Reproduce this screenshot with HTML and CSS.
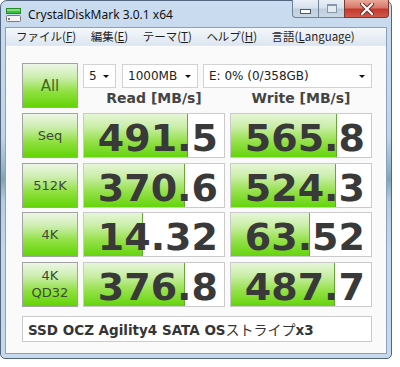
FILE: index.html
```html
<!DOCTYPE html>
<html lang="ja">
<head>
    <meta charset="UTF-8">
    <title>CrystalDiskMark 3.0.1 x64</title>
    <link rel="stylesheet" href="styles.css">
</head>
<body>

<div class="window">
    <!-- Title bar -->
    <div class="titlebar">
        <svg class="app-icon" width="15" height="14" viewBox="0 0 15 14">
            <rect x="0.5" y="0.5" width="14" height="5" fill="#39c03a" stroke="#2a8a2a"/>
            <rect x="1" y="1" width="13" height="2" fill="#7ee07a"/>
            <rect x="0.5" y="7.5" width="14" height="6" rx="1" fill="#f4f4f4" stroke="#7a7a7a"/>
            <rect x="2" y="10" width="2" height="2" fill="#7a7a7a"/>
        </svg>
        <span class="title">CrystalDiskMark 3.0.1 x64</span>
        <div class="caption-buttons">
            <div class="cap-btn min"><span class="min-icon"></span></div>
            <div class="cap-btn max"><span class="max-icon"></span></div>
            <div class="cap-btn close">
                <svg width="14" height="12" viewBox="0 0 14 12">
                    <path d="M2 1 L12 11 M12 1 L2 11" stroke="#6b2a24" stroke-width="4" stroke-linecap="round"/>
                    <path d="M2 1 L12 11 M12 1 L2 11" stroke="#fff" stroke-width="2.2" stroke-linecap="round"/>
                </svg>
            </div>
        </div>
    </div>

    <div class="client">
        <!-- Menu -->
        <div class="menubar">
            <span class="menu-item">ファイル(<u>F</u>)</span>
            <span class="menu-item">編集(<u>E</u>)</span>
            <span class="menu-item">テーマ(<u>T</u>)</span>
            <span class="menu-item">ヘルプ(<u>H</u>)</span>
            <span class="menu-item">言語(<u>L</u>anguage)</span>
        </div>

        <div class="content">
            <div class="top">
                <div class="test-btn all">All</div>
                <div class="top-right">
                    <div class="selects">
                        <div class="select sel-count">5<i class="arrow"></i></div>
                        <div class="select sel-size">1000MB<i class="arrow"></i></div>
                        <div class="select sel-drive">E: 0% (0/358GB)<i class="arrow"></i></div>
                    </div>
                    <div class="heads">
                        <div class="head">Read [MB/s]</div>
                        <div class="head">Write [MB/s]</div>
                    </div>
                </div>
            </div>

            <div class="rows">
                <div class="test-btn">Seq</div>
                <div class="cell"><div class="bar" style="width:104px"></div><span class="num">491.5</span></div>
                <div class="cell"><div class="bar" style="width:106px"></div><span class="num">565.8</span></div>

                <div class="test-btn">512K</div>
                <div class="cell"><div class="bar" style="width:101px"></div><span class="num">370.6</span></div>
                <div class="cell"><div class="bar" style="width:105px"></div><span class="num">524.3</span></div>

                <div class="test-btn">4K</div>
                <div class="cell"><div class="bar" style="width:59px"></div><span class="num">14.32</span></div>
                <div class="cell"><div class="bar" style="width:79px"></div><span class="num">63.52</span></div>

                <div class="test-btn two-line">4K<br>QD32</div>
                <div class="cell"><div class="bar" style="width:101px"></div><span class="num">376.8</span></div>
                <div class="cell"><div class="bar" style="width:104px"></div><span class="num">487.7</span></div>
            </div>

            <div class="comment">SSD OCZ Agility4 SATA OS<span class="jp">ストライプ</span>x3</div>
        </div>
    </div>
</div>

</body>
</html>
```

FILE: styles.css
```css
body {
    margin: 0;
    background-color: #fff;
    font-family: "DejaVu Sans", "Noto Sans CJK JP", sans-serif;
}
.window {
    width: 392px;
    height: 359px;
    box-sizing: border-box;
    display: flex;
    flex-direction: column;
    border: 1px solid #52677e;
    border-radius: 7px 7px 5px 5px;
    background: linear-gradient(to bottom, #cadcef 0%, #c0d4e9 38%, #93b4c4 47%, #7fa6b3 50%, #b5cde0 56%, #c4d7eb 70%, #c7d9ec 100%);
}

/* title bar */
.titlebar {
    height: 26px;
    display: flex;
    align-items: center;
}
.app-icon {
    margin-left: 5px;
    margin-top: 2px;
}
.title {
    margin-left: 7px;
    margin-top: 1px;
    font-family: "Noto Sans", sans-serif;
    font-size: 12px;
    color: #111;
}
.caption-buttons {
    margin-left: auto;
    margin-right: 2px;
    align-self: flex-start;
    margin-top: -1px;
    display: flex;
}
.cap-btn {
    height: 18px;
    display: flex;
    align-items: center;
    justify-content: center;
    box-sizing: border-box;
    border: 1px solid #6f8399;
    border-top: none;
}
.cap-btn.min,
.cap-btn.max {
    width: 26px;
    background: linear-gradient(to bottom, #e9eff6 0%, #d8e2ed 45%, #bfcedd 55%, #cbd8e6 100%);
}
.cap-btn.min {
    border-radius: 0 0 0 4px;
    border-right: none;
}
.cap-btn.max {
    border-right: none;
}
.cap-btn.close {
    width: 45px;
    border-radius: 0 0 4px 0;
    border-color: #7a3b35;
    background: linear-gradient(to bottom, #e8a898 0%, #d9786a 45%, #c23a2e 55%, #d2584a 100%);
}
.min-icon {
    width: 9px;
    height: 3px;
    margin-top: 5px;
    border: 1px solid #4c5c6e;
    background: #fff;
}
.max-icon {
    width: 8px;
    height: 6px;
    border: 1px solid #8697aa;
    border-top-width: 2px;
    background: #e4ebf3;
}

/* client area */
.client {
    flex: 1;
    margin: 0 4px 4px;
    border: 1px solid #8aa1ba;
    display: flex;
    flex-direction: column;
    background-color: #fafafa;
}
.menubar {
    height: 17px;
    display: flex;
    align-items: center;
    padding-left: 10px;
    background: linear-gradient(to bottom, #f5f8fb, #dde6f0);
    border-bottom: 1px solid #e3e9f0;
    font-family: "Noto Sans CJK JP", sans-serif;
    font-size: 11.5px;
    color: #1e1e1e;
}
.menu-item {
    margin-right: 14.5px;
    line-height: 17px;
}
.menu-item u {
    text-decoration-thickness: 1px;
    text-underline-offset: 1px;
}
.content {
    flex: 1;
    padding: 17px 0 0 16px;
}

/* buttons */
.test-btn {
    box-sizing: border-box;
    width: 56px;
    display: flex;
    align-items: center;
    justify-content: center;
    text-align: center;
    border: 1px solid #a3a3a3;
    background: linear-gradient(to bottom, #edf6e6 0%, #cdeeb0 30%, #8fe040 65%, #62d404 100%);
    font-size: 13px;
    color: #3d4a34;
}
.test-btn.all {
    height: 45px;
    font-size: 15px;
    color: #3f6a24;
}
.test-btn.two-line {
    line-height: 17px;
}

/* top area */
.top {
    display: flex;
    gap: 5px;
}
.top-right {
    width: 289px;
    display: flex;
    flex-direction: column;
}
.selects {
    margin-top: 1px;
    display: flex;
    gap: 5px;
}
.select {
    box-sizing: border-box;
    height: 24px;
    display: flex;
    align-items: center;
    padding: 0 6px 0 5px;
    background: #fff;
    border: 1px solid #d2d2d2;
    font-size: 12px;
    color: #222;
}
.sel-count { width: 33px; }
.sel-size { width: 76px; margin-left: 1px; }
.sel-drive { flex: 1; }
.arrow {
    margin-left: auto;
    width: 0;
    height: 0;
    border-left: 3px solid transparent;
    border-right: 3px solid transparent;
    border-top: 3px solid #111;
}
.heads {
    display: grid;
    grid-template-columns: 142px 142px;
    column-gap: 5px;
}
.head {
    text-align: center;
    font-weight: bold;
    font-size: 14px;
    line-height: 20px;
    color: #444;
}

/* result rows */
.rows {
    margin-top: 5px;
    display: grid;
    grid-template-columns: 56px 142px 142px;
    grid-auto-rows: 45px;
    column-gap: 5px;
    row-gap: 4.5px;
}
.cell {
    box-sizing: border-box;
    display: grid;
    border: 1px solid #cacaca;
    background: #fff;
}
.bar,
.num {
    grid-area: 1 / 1;
}
.bar {
    justify-self: start;
    box-sizing: border-box;
    border-right: 1px solid #68a33c;
    background: linear-gradient(to bottom, #e6f6d8 0%, #c9eea6 30%, #93e048 65%, #64d50c 100%);
}
.num {
    justify-self: end;
    padding: 5px 6px 0 0;
    font-weight: bold;
    font-size: 38px;
    line-height: 38px;
    color: #393939;
}

.comment {
    box-sizing: border-box;
    width: 350px;
    height: 26px;
    margin-top: 9px;
    padding-left: 5px;
    border: 1px solid #cacaca;
    background: #fff;
    font-weight: bold;
    font-size: 13.5px;
    line-height: 24px;
    color: #353535;
}
.comment .jp {
    font-weight: normal;
    font-family: "Noto Sans CJK JP", sans-serif;
    font-size: 14px;
}
```
